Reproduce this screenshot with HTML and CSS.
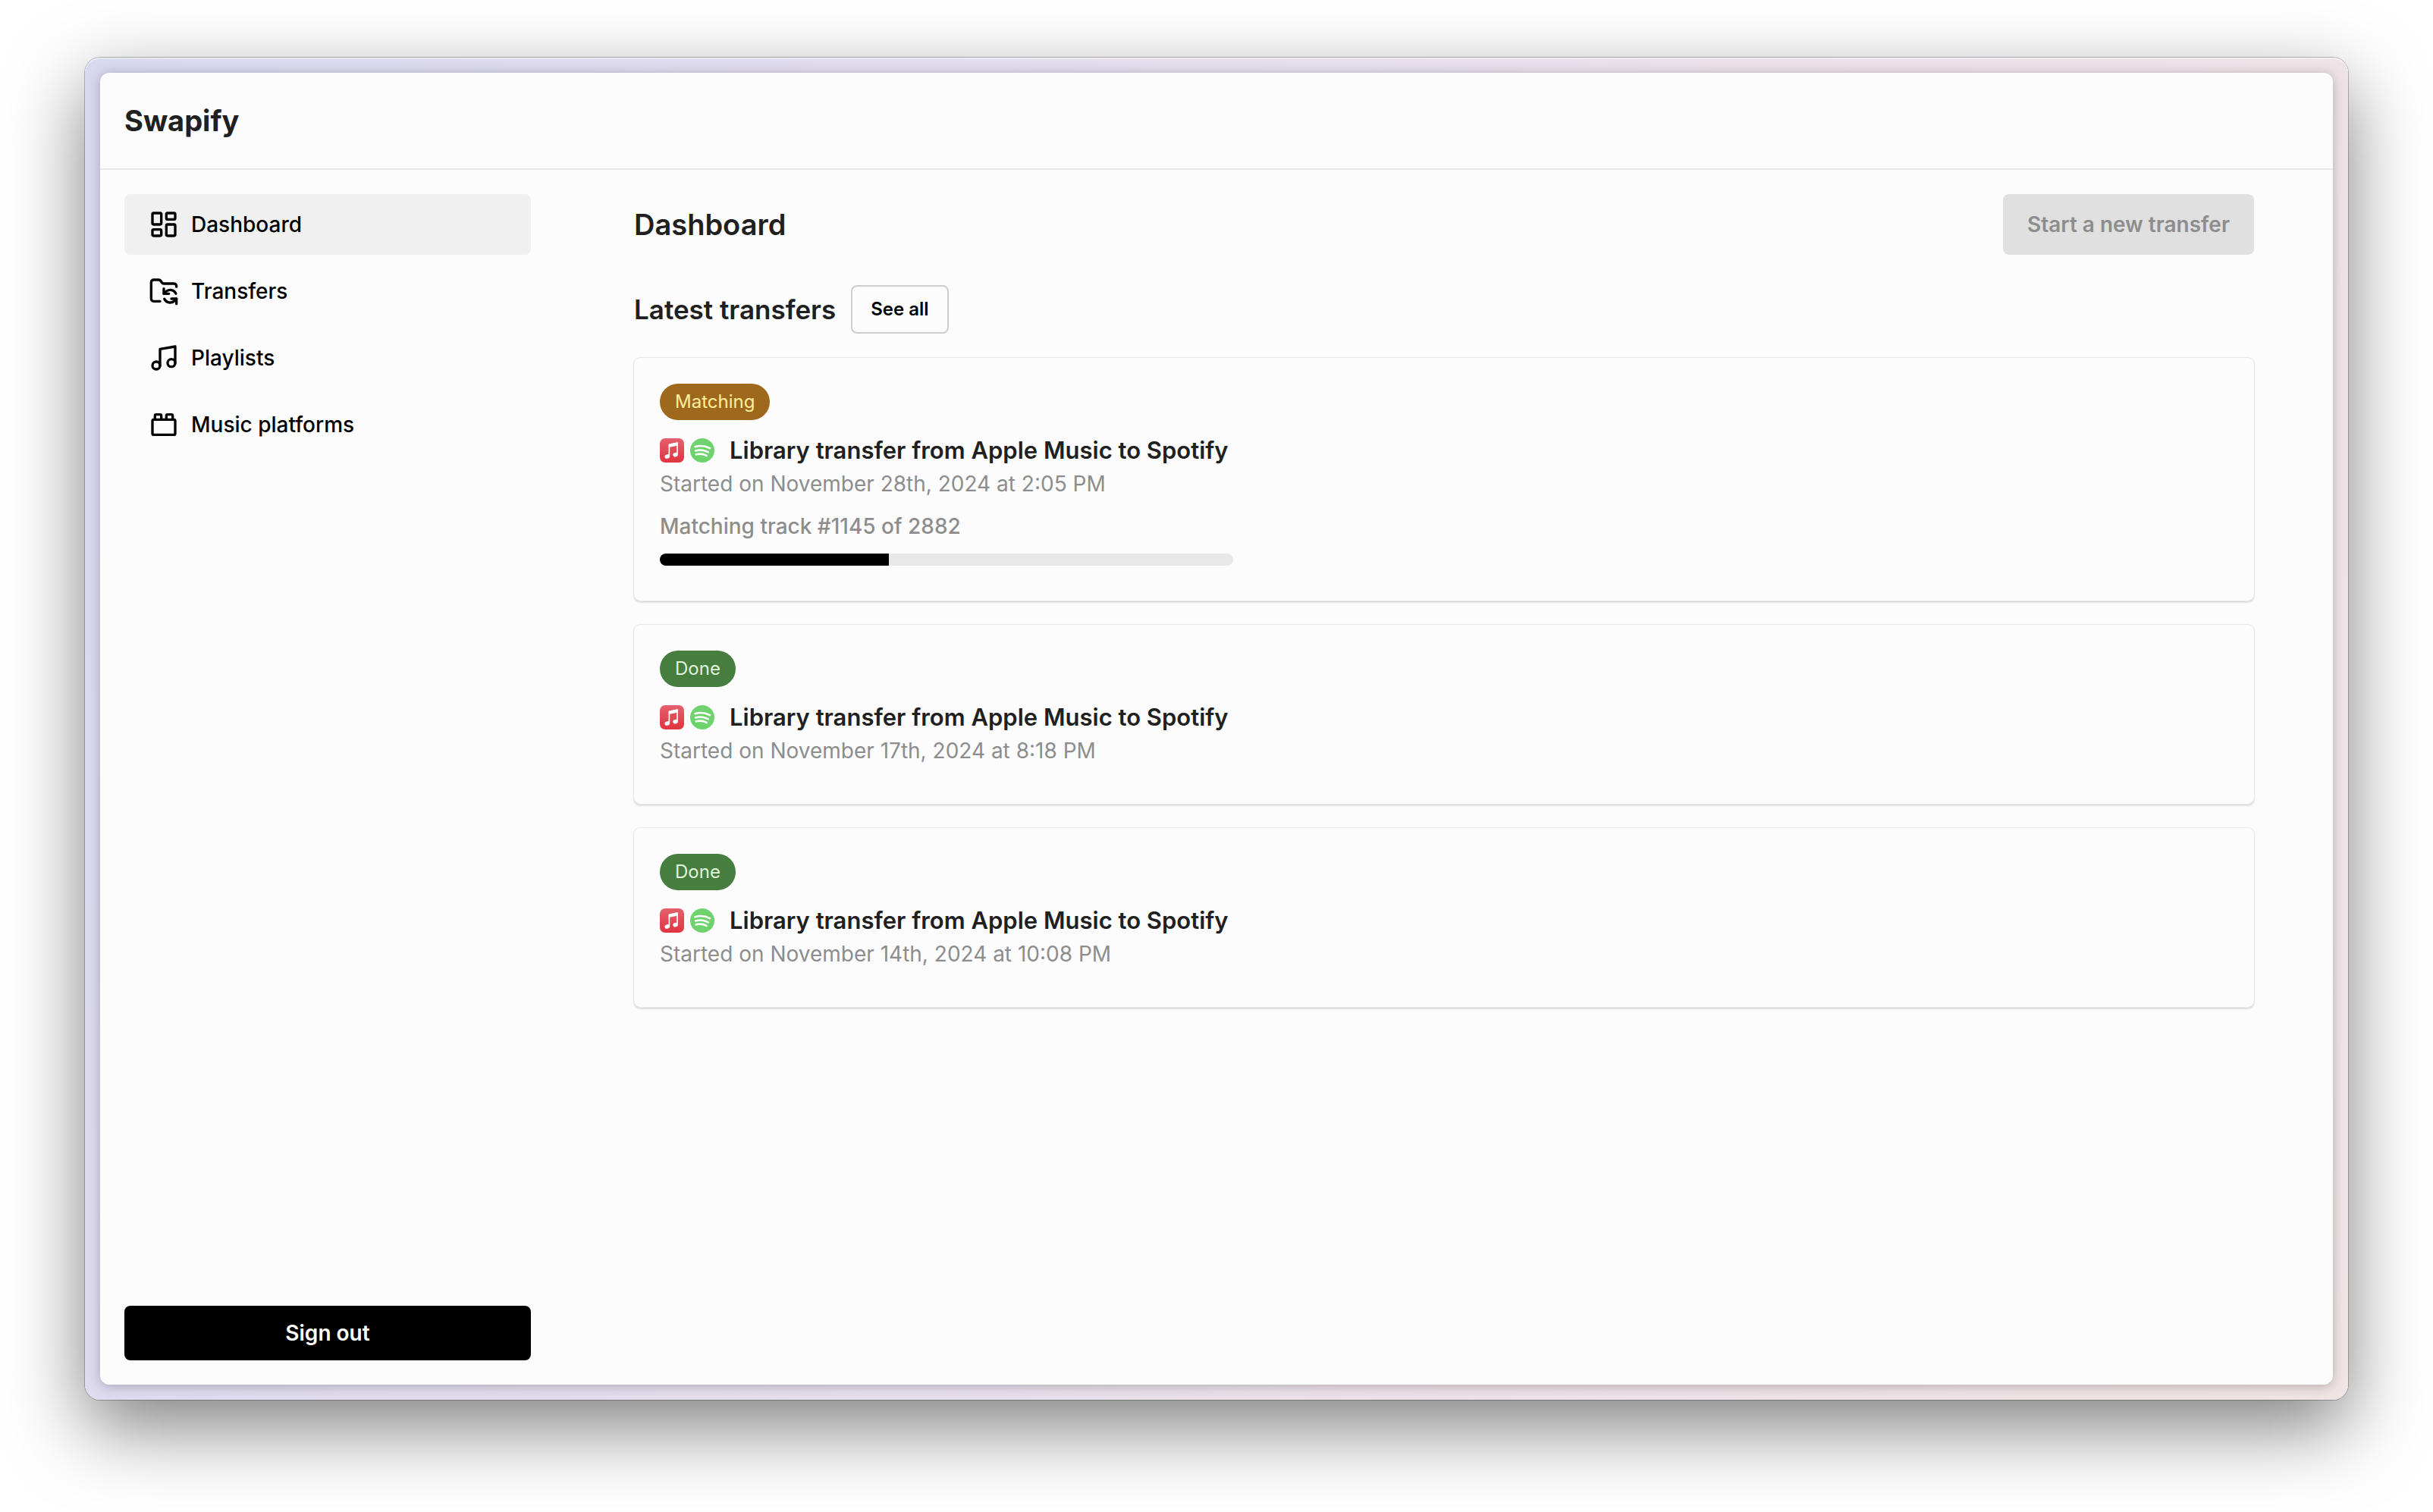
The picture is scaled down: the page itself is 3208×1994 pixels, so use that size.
FILE: index.html
```html
<!DOCTYPE html>
<html lang="en">
<head>
<meta charset="utf-8">
<meta name="viewport" content="width=device-width, initial-scale=1">
<title>Swapify</title>
<link rel="stylesheet" href="styles.css">
</head>
<body>
<svg class="sprite" aria-hidden="true">
  <defs>
    <linearGradient id="music-red" x1="0" y1="0" x2="0" y2="1">
      <stop offset="0" stop-color="#e4606d"/>
      <stop offset="1" stop-color="#df3540"/>
    </linearGradient>
    <symbol id="apple-music" viewBox="0 0 32 32">
      <rect width="32" height="32" rx="7" fill="url(#music-red)"/>
      <path d="M12.4 8.2 23 6v14.5" fill="none" stroke="#fff" stroke-width="1.6" stroke-linejoin="round"/>
      <path d="M12.4 8.2v14.6" fill="none" stroke="#fff" stroke-width="1.6"/>
      <path d="M11.7 7.8 23.8 5.2v4.2l-12.1 2.7z" fill="#fff"/>
      <ellipse cx="9.8" cy="24" rx="3.4" ry="2.7" fill="#fff" transform="rotate(-20 9.8 24)"/>
      <ellipse cx="20.6" cy="21.6" rx="3.3" ry="2.7" fill="#fff" transform="rotate(-20 20.6 21.6)"/>
    </symbol>
    <symbol id="spotify" viewBox="0 0 32 32">
      <circle cx="16" cy="16" r="16" fill="#6fd36d"/>
      <path d="M6.400 11.200c6.600-2 13.800-1.300 19.600 2M7.200 16.400c5.600-1.600 11.600-1 16.600 1.900M7.800 21.300c4.700-1.300 9.500-.8 13.800 1.600" fill="none" stroke="#fff" stroke-width="2.600" stroke-linecap="round"/>
    </symbol>
  </defs>
</svg>
<div class="window">
  <div class="app">
    <header class="topbar"><h1 class="brand">Swapify</h1></header>
    <div class="layout">
      <aside class="sidebar">
        <nav class="nav" aria-label="Main">
          <a class="nav-link active" href="#dashboard" aria-current="page">
            <svg class="icon" viewBox="0 0 24 24"><rect width="7" height="9" x="3" y="3" rx="1"/><rect width="7" height="5" x="14" y="3" rx="1"/><rect width="7" height="9" x="14" y="12" rx="1"/><rect width="7" height="5" x="3" y="16" rx="1"/></svg>
            Dashboard</a>
          <a class="nav-link" href="#transfers">
            <svg class="icon" viewBox="0 0 24 24"><path d="M9 20H4a2 2 0 0 1-2-2V5a2 2 0 0 1 2-2h3.900a2 2 0 0 1 1.690.900l.810 1.200a2 2 0 0 0 1.670.900H20a2 2 0 0 1 2 2v.500"/><path d="M12 10v4h4"/><path d="m12 14 1.535-1.605a5 5 0 0 1 8 1.500"/><path d="M22 22v-4h-4"/><path d="m22 18-1.535 1.605a5 5 0 0 1-8-1.500"/></svg>
            Transfers</a>
          <a class="nav-link" href="#playlists">
            <svg class="icon" viewBox="0 0 24 24"><path d="M9 18V5l12-2v13"/><circle cx="6" cy="18" r="3"/><circle cx="18" cy="16" r="3"/></svg>
            Playlists</a>
          <a class="nav-link" href="#platforms">
            <svg class="icon" viewBox="0 0 24 24"><rect width="18" height="12" x="3" y="8" rx="1"/><path d="M10 8V5c0-.600-.400-1-1-1H6a1 1 0 0 0-1 1v3"/><path d="M19 8V5c0-.600-.400-1-1-1h-3a1 1 0 0 0-1 1v3"/></svg>
            Music platforms</a>
        </nav>
        <button class="button sign-out" type="button">Sign out</button>
      </aside>
      <main class="content">
        <div class="page-head">
          <h2 class="page-title">Dashboard</h2>
          <button class="button start" type="button" disabled>Start a new transfer</button>
        </div>
        <div class="section-head">
          <h3 class="section-title">Latest transfers</h3>
          <button class="button see-all" type="button">See all</button>
        </div>
        <article class="card">
          <span class="badge matching">Matching</span>
          <div class="details">
            <h4 class="card-title"><svg class="logo"><use href="#apple-music"/></svg><svg class="logo"><use href="#spotify"/></svg><span class="card-name">Library transfer from Apple Music to Spotify</span></h4>
            <p class="date">Started on November 28th, 2024 at 2:05 PM</p>
            <p class="status" id="match-status">Matching track #1145 of 2882</p>
            <div class="progress" role="progressbar" aria-labelledby="match-status" aria-valuemin="0" aria-valuemax="2882" aria-valuenow="1145"><div class="progress-fill" style="width:40%"></div></div>
          </div>
        </article>
        <article class="card">
          <span class="badge done">Done</span>
          <div class="details">
            <h4 class="card-title"><svg class="logo"><use href="#apple-music"/></svg><svg class="logo"><use href="#spotify"/></svg><span class="card-name">Library transfer from Apple Music to Spotify</span></h4>
            <p class="date">Started on November 17th, 2024 at 8:18 PM</p>
          </div>
        </article>
        <article class="card">
          <span class="badge done">Done</span>
          <div class="details">
            <h4 class="card-title"><svg class="logo"><use href="#apple-music"/></svg><svg class="logo"><use href="#spotify"/></svg><span class="card-name">Library transfer from Apple Music to Spotify</span></h4>
            <p class="date">Started on November 14th, 2024 at 10:08 PM</p>
          </div>
        </article>
      </main>
    </div>
  </div>
</div>
</body>
</html>
```

FILE: styles.css
```css
* { box-sizing: border-box; }

body {
  margin: 0;
  min-height: 100vh;
  padding: 76px 112px 148px;
  display: flex;
  background: #fff;
  color: #202020;
  font-family: Inter, "Liberation Sans", sans-serif;
  font-size: 28px;
  line-height: 40px;
}

h1, h2, h3, h4, p { margin: 0; }

.sprite { position: absolute; width: 0; height: 0; }

.window {
  flex: 1;
  display: flex;
  padding: 20px;
  border-radius: 20px;
  background: linear-gradient(110deg, #d9d8f1 0%, #e3deee 35%, #ece2e9 65%, #f1e4e5 100%);
  box-shadow: inset 0 2px 1px rgba(255, 255, 255, .4), 0 0 0 1px rgba(0, 0, 0, .25), 0 36px 100px rgba(0, 0, 0, .5);
}

.app {
  flex: 1;
  display: flex;
  flex-direction: column;
  border-radius: 12px;
  background: #fcfcfc;
  box-shadow: 0 2px 16px rgba(0, 0, 0, .25);
}

.topbar {
  padding: 38px 32px;
  border-bottom: 2px solid #e8e8e8;
}

.brand { font-size: 38px; line-height: 50px; font-weight: 700; }

.layout {
  flex: 1;
  display: flex;
  gap: 136px;
  padding: 32px 104px 32px 32px;
}

.sidebar {
  flex: none;
  width: 536px;
  display: flex;
  flex-direction: column;
  justify-content: space-between;
}

.nav { display: flex; flex-direction: column; gap: 8px; }

.nav-link {
  display: flex;
  align-items: center;
  gap: 16px;
  height: 80px;
  padding: 0 32px;
  border-radius: 8px;
  color: #000;
  font-weight: 500;
  text-decoration: none;
}

.nav-link.active { background: #f0f0f0; }

.icon {
  width: 40px;
  height: 40px;
  fill: none;
  stroke: currentColor;
  stroke-width: 2;
  stroke-linecap: round;
  stroke-linejoin: round;
}

.button {
  border: 0;
  border-radius: 8px;
  font: inherit;
  font-weight: 600;
}

.sign-out { height: 72px; background: #000; color: #fff; }

.content { flex: 1; min-width: 0; }

.page-head { display: flex; align-items: center; justify-content: space-between; }

.page-title { font-size: 38px; line-height: 50px; font-weight: 600; }

.start { height: 80px; padding: 0 32px; background: #e0e0e0; color: #8d8d8d; }

.section-head { display: flex; align-items: center; gap: 20px; margin: 40px 0 32px; }

.section-title { font-size: 35px; line-height: 48px; font-weight: 600; }

.see-all {
  height: 64px;
  padding: 0 24px;
  border: 2px solid #cecece;
  background: transparent;
  color: #000;
  font-size: 24px;
}

.card {
  display: flex;
  flex-direction: column;
  align-items: flex-start;
  gap: 16px;
  padding: 34px 34px 46px;
  border-radius: 8px;
  box-shadow: 0 0 0 1px #e8e8e8, 0 2px 3px rgba(0, 0, 0, .2);
}

.card + .card { margin-top: 32px; }

.badge {
  height: 48px;
  padding: 0 20px;
  border-radius: 24px;
  font-size: 24px;
  line-height: 48px;
}

.matching { background: #9e691d; color: #ffee9c; }
.done { background: #467e3f; color: #dff3dd; }

.details { min-width: 756px; padding-bottom: 4px; }
.status + .progress { margin: 16px 0 -4px; }

.card-title {
  display: flex;
  align-items: center;
  gap: 8px;
  font-size: 31px;
  line-height: 48px;
  font-weight: 600;
}

.card-name { padding-left: 12px; }
.logo { width: 32px; height: 32px; }
.date { color: #8d8d8d; }
.status { margin-top: 16px; color: #8d8d8d; font-weight: 500; }

.progress { height: 16px; border-radius: 8px; background: #e8e8e8; overflow: hidden; }
.progress-fill { height: 100%; background: #000; }
```
